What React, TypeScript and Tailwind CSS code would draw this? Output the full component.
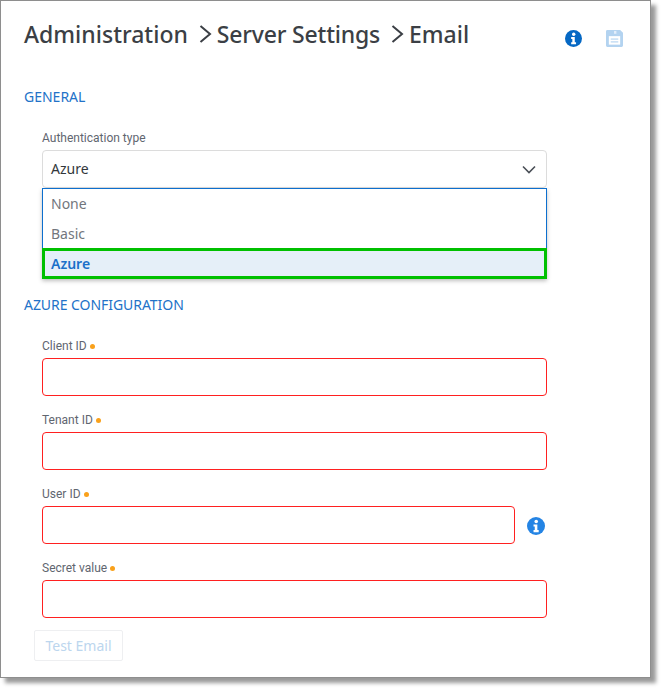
import React from "react";

const noto = "font-['Noto_Sans',sans-serif]";
const roboto = "font-['Roboto',sans-serif]";

function InfoIcon({ size, color }: { size: number; color: string }) {
  return (
    <svg width={size} height={size} viewBox="0 0 16 16" className="block shrink-0">
      <circle cx="8" cy="8" r="8" fill={color} />
      <circle cx="8.2" cy="4" r="1.6" fill="#fff" />
      <path d="M5.8 6.6h3.4v5h1.2v1.9H5.8v-1.9h1.1V8.5H5.8z" fill="#fff" />
    </svg>
  );
}

function SaveIcon() {
  return (
    <svg width="17" height="17" viewBox="0 0 18 18" className="block shrink-0">
      <path d="M1.5 0H15l3 3v13.5a1.5 1.5 0 0 1-1.5 1.5h-15A1.5 1.5 0 0 1 0 16.500V1.500A1.500 1.500 0 0 1 1.500 0z" fill="#b3d3f0" />
      <rect x="8.500" y="1" width="2.500" height="3" fill="#e3eefa" />
      <rect x="3" y="6.500" width="12" height="9" fill="#fff" />
      <rect x="5" y="9" width="8" height="1.200" fill="#b3d3f0" />
      <rect x="5" y="12" width="8" height="1.200" fill="#b3d3f0" />
    </svg>
  );
}

function Crumb({ children, tight = false }: { children: React.ReactNode; tight?: boolean }) {
  return (
    <span className={`text-[23px] font-medium leading-[32px] text-[#3b3f45] ${tight ? "tracking-[-0.2px]" : ""}`}>
      {children}
    </span>
  );
}

function Chevron() {
  return (
    <svg width="13" height="18" viewBox="0 0 13 18" className="block shrink-0">
      <path d="M1.500 1 L11 9 L1.500 17" fill="none" stroke="#3b3f45" strokeWidth="2" />
    </svg>
  );
}

function Field({ label, wide = true }: { label: string; wide?: boolean }) {
  return (
    <div className="flex flex-col">
      <div className={`${roboto} flex items-center h-[16px] text-[12px] leading-[16px] text-[#5f6670]`}>
        <span>{label}</span>
        <span className="ml-[3px] w-[5px] h-[5px] rounded-full bg-[#f9a11b]" />
      </div>
      <div className="flex items-center mt-[4px]">
        <div className={`h-[38px] border border-[#ff2020] rounded-[4px] bg-white ${wide ? "w-[505px]" : "w-[473px]"}`} />
        {!wide && (
          <div className="ml-[12px] mt-[1px]">
            <InfoIcon size={18} color="#2484e4" />
          </div>
        )}
      </div>
    </div>
  );
}

export default function App() {
  return (
    <div className={`w-[661px] h-[688px] bg-white ${noto}`}>
      <div className="w-[651px] h-[678px] border border-[#8e8e8e] bg-white shadow-[5px_5px_4px_#9a9a9a] pl-[23px] pr-[27px] flex flex-col">
        <div className="flex items-start justify-between pt-[17px] h-[86px]">
          <div className="flex items-center h-[32px]">
            <Crumb>Administration</Crumb>
            <span className="ml-[11px] mr-[5px]"><Chevron /></span>
            <Crumb tight>Server Settings</Crumb>
            <span className="ml-[11px] mr-[5px]"><Chevron /></span>
            <Crumb>Email</Crumb>
          </div>
          <div className="flex items-center gap-[24px] pt-[12px]">
            <InfoIcon size={17} color="#0568c4" />
            <SaveIcon />
          </div>
        </div>

        <div className="h-[20px] flex items-center text-[14px] leading-[20px] text-[#2272c8]">GENERAL</div>

        <div className="ml-[18px] w-[505px] mt-[23px] relative">
          <div className={`${roboto} h-[16px] text-[12px] leading-[16px] text-[#5f6670]`}>Authentication type</div>
          <div className="mt-[4px] h-[38px] border border-[#dcdcdc] rounded-[4px] flex items-center justify-between pl-[8px] pr-[10px] pb-[2px] text-[14px] text-[#33373c]">
            <span>Azure</span>
            <svg width="14" height="9" viewBox="0 0 14 9" className="block mt-[2px]">
              <path d="M1 1.500 L7 7.500 L13 1.500" fill="none" stroke="#4a4f57" strokeWidth="1.600" />
            </svg>
          </div>
          <div className="absolute left-0 top-[58px] w-[505px] h-[91px] bg-white border-x border-t border-[#0d6fce] shadow-[0_2px_4px_rgba(0,0,0,0.25)] text-[14px]">
            <div className="h-[29px] flex items-center pl-[8px] text-[#72767d]">None</div>
            <div className="h-[30px] flex items-center pl-[8px] text-[#72767d]">Basic</div>
            <div className="-mx-px w-[505px] h-[31px] flex items-center pl-[6px] bg-[#e5eff8] border-[3px] border-[#00c000] font-semibold text-[#1a6fc9]">Azure</div>
          </div>
        </div>

        <div className="mt-[107px] h-[20px] flex items-center text-[14px] leading-[20px] tracking-[-0.05px] text-[#2272c8]">AZURE CONFIGURATION</div>

        <div className="ml-[18px] mt-[23px] flex flex-col gap-[16px]">
          <Field label="Client ID" />
          <Field label="Tenant ID" />
          <Field label="User ID" wide={false} />
          <Field label="Secret value" />
        </div>

        <div className="ml-[10px] mt-[12px] w-[89px] h-[31px] border border-[#eeeff1] rounded-[2px] flex items-center justify-center text-[14px] text-[#bcd6ee]">
          Test Email
        </div>
      </div>
    </div>
  );
}
